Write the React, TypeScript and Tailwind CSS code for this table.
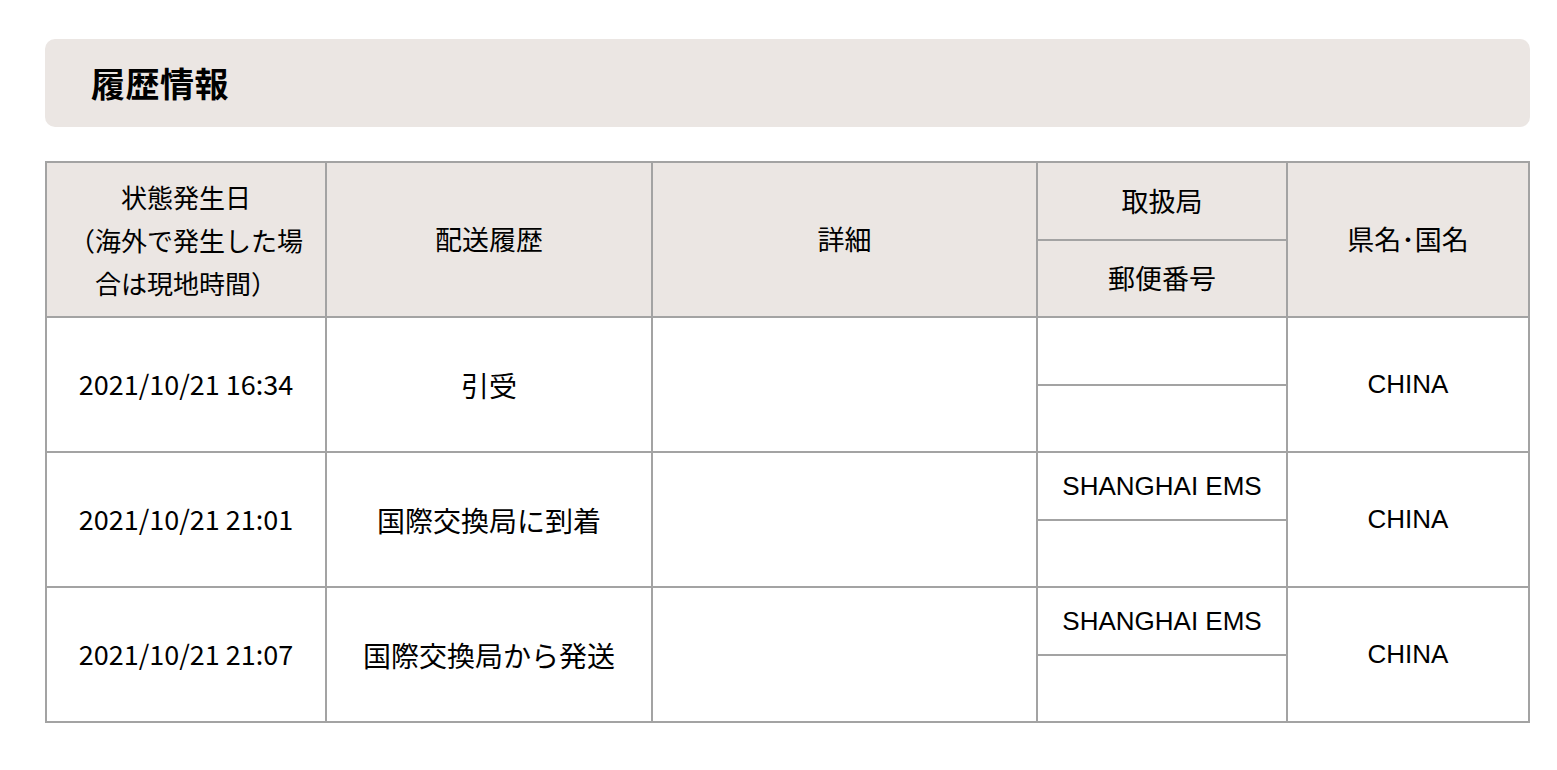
import React from "react";

const rows = [
  { date: "2021/10/21 16:34", status: "引受", office: "", zip: "", pref: "CHINA" },
  { date: "2021/10/21 21:01", status: "国際交換局に到着", office: "SHANGHAI EMS", zip: "", pref: "CHINA" },
  { date: "2021/10/21 21:07", status: "国際交換局から発送", office: "SHANGHAI EMS", zip: "", pref: "CHINA" },
];

const jp = { fontFamily: '"Noto Sans CJK JP", sans-serif' };
const en = { fontFamily: '"Liberation Sans", "Noto Sans CJK JP", sans-serif' };

export default function App() {
  const cell = "border-2 border-[#a3a3a3] text-center align-middle p-0";
  return (
    <div className="min-h-[770px] bg-white pl-[45px] pr-[27px] pt-[39px] text-black" style={jp}>
      <div className="h-[88px] w-[1485px] rounded-[10px] bg-[#ebe6e3] flex items-center pl-[46px]">
        <h2 className="text-[34px] font-bold leading-none tracking-[0.5px]">履歴情報</h2>
      </div>
      <table className="mt-[34px] w-[1483px] table-fixed border-collapse text-[27px]">
        <colgroup>
          <col className="w-[280px]" />
          <col className="w-[326px]" />
          <col className="w-[385px]" />
          <col className="w-[250px]" />
          <col className="w-[242px]" />
        </colgroup>
        <thead>
          <tr className="h-[78px] bg-[#ebe6e3]">
            <th rowSpan={2} className={`${cell} font-normal leading-[43px] text-[26px]`}>
              状態発生日<br />（海外で発生した場<br />合は現地時間）
            </th>
            <th rowSpan={2} className={`${cell} font-normal`}>配送履歴</th>
            <th rowSpan={2} className={`${cell} font-normal`}>詳細</th>
            <th className={`${cell} font-normal`}>取扱局</th>
            <th rowSpan={2} className={`${cell} font-normal`}>県名･国名</th>
          </tr>
          <tr className="h-[77px] bg-[#ebe6e3]">
            <th className={`${cell} font-normal`}>郵便番号</th>
          </tr>
        </thead>
        <tbody>
          {rows.map((r, i) => (
            <React.Fragment key={i}>
              <tr className="h-[68px]">
                <td rowSpan={2} className={`${cell} text-[27px]`}>{r.date}</td>
                <td rowSpan={2} className={`${cell} text-[28px]`}>{r.status}</td>
                <td rowSpan={2} className={cell}></td>
                <td className={`${cell} text-[26px]`} style={en}>{r.office}</td>
                <td rowSpan={2} className={`${cell} text-[26px]`} style={en}>{r.pref}</td>
              </tr>
              <tr className="h-[67px]">
                <td className={cell}>{r.zip}</td>
              </tr>
            </React.Fragment>
          ))}
        </tbody>
      </table>
    </div>
  );
}
